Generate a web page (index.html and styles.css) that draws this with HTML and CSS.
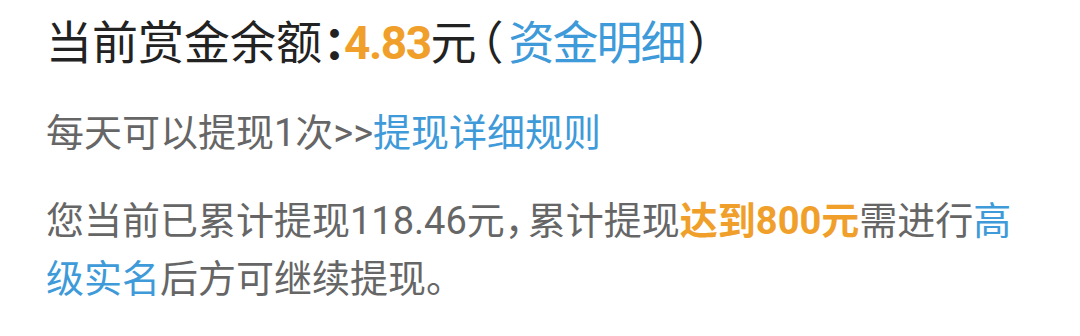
FILE: index.html
```html
<!DOCTYPE html>
<html lang="zh-CN">
<head>
<meta charset="utf-8">
<link rel="stylesheet" href="styles.css">
</head>
<body>
<div class="panel">
  <p class="balance">当前赏金余额<span class="colon">：</span><span class="amount">4.83</span>元<span class="paren open">（</span><span class="link">资金明细</span><span class="paren close">）</span></p>
  <p class="note">每天可以提现1次&gt;&gt;<span class="link">提现详细规则</span></p>
  <p class="note multi">您当前已累计提现118.46元<span class="comma">，</span>累计提现<span class="hot">达到800元</span>需进行<span class="link">高级实名</span>后方可继续提现。</p>
</div>
</body>
</html>
```
FILE: styles.css
```css
html, body {
  margin: 0;
  padding: 0;
  background: #ffffff;
}
.panel {
  padding: 13px 50px 0 46px;
  font-family: Roboto, "Noto Sans CJK SC", sans-serif;
}
.balance {
  margin: 0;
  font-size: 46px;
  line-height: 60px;
  color: #222222;
}
.colon {
  font-weight: 700;
  font-feature-settings: "halt";
  margin-left: 1px;
  margin-right: -2px;
}
.amount {
  color: #f0a02a;
  font-weight: 700;
  letter-spacing: -1.5px;
}
.paren {
  font-feature-settings: "halt";
}
.paren.open {
  margin-left: 4px;
  margin-right: 5px;
}
.paren.close {
  margin-left: 3px;
}
.link {
  color: #3e9ad8;
}
.balance .link {
  letter-spacing: -2px;
}
.note {
  margin: 0;
  font-size: 38px;
  line-height: 58px;
  color: #666666;
}
.balance + .note {
  margin-top: 31px;
}
.note + .note {
  margin-top: 30px;
}
.comma {
  font-feature-settings: "halt";
  margin-right: 4px;
}
.hot {
  color: #f0a02a;
  font-weight: 700;
}
```
